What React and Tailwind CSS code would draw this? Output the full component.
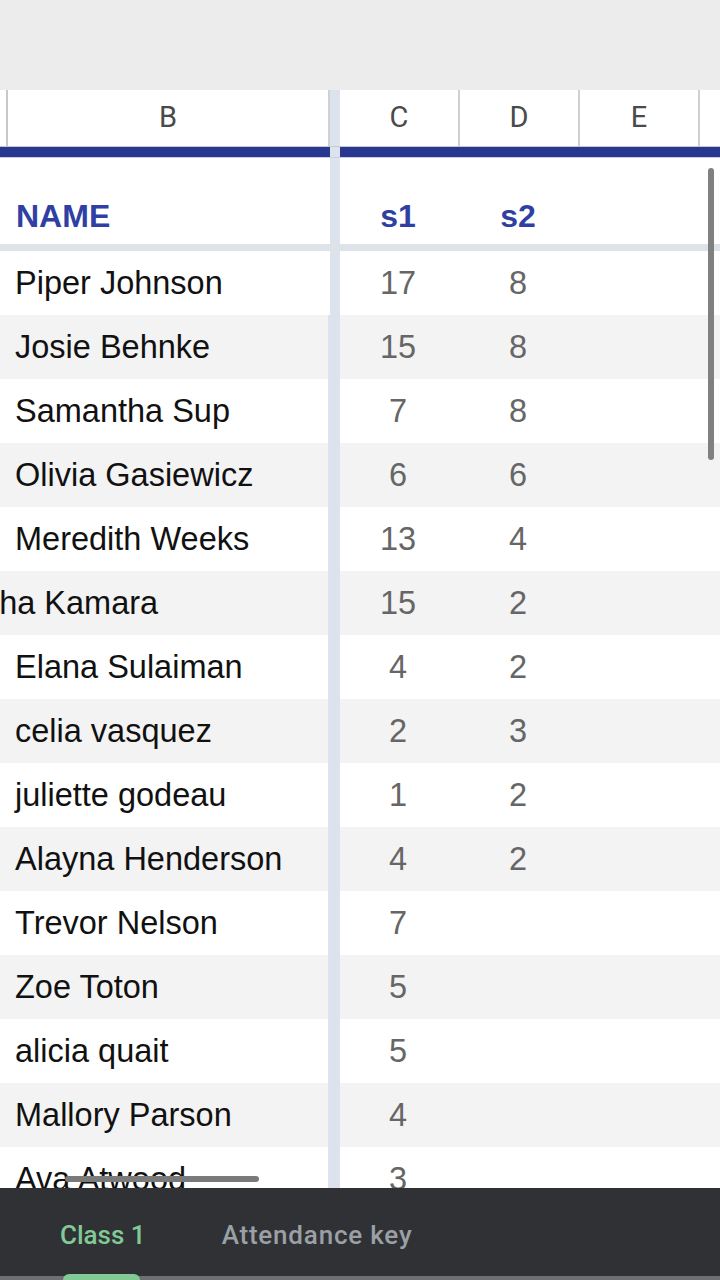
const rows = [
  { name: 'Piper Johnson', s1: '17', s2: '8' },
  { name: 'Josie Behnke', s1: '15', s2: '8' },
  { name: 'Samantha Sup', s1: '7', s2: '8' },
  { name: 'Olivia Gasiewicz', s1: '6', s2: '6' },
  { name: 'Meredith Weeks', s1: '13', s2: '4' },
  { name: 'Aisha Kamara', s1: '15', s2: '2', cut: true },
  { name: 'Elana Sulaiman', s1: '4', s2: '2' },
  { name: 'celia vasquez', s1: '2', s2: '3' },
  { name: 'juliette godeau', s1: '1', s2: '2' },
  { name: 'Alayna Henderson', s1: '4', s2: '2' },
  { name: 'Trevor Nelson', s1: '7', s2: '' },
  { name: 'Zoe Toton', s1: '5', s2: '' },
  { name: 'alicia quait', s1: '5', s2: '' },
  { name: 'Mallory Parson', s1: '4', s2: '' },
  { name: 'Ava Atwood', s1: '3', s2: '' },
]

function ColLetter({ children, className = '' }) {
  return (
    <div className={`h-full flex items-center justify-center border-r-2 border-[#d0d0d0] font-['Roboto',sans-serif] text-[29px] text-[#4a4a4a] ${className}`}>
      {children}
    </div>
  )
}

export default function App() {
  return (
    <div className="relative w-[720px] h-[1280px] overflow-hidden bg-white flex flex-col font-['Liberation_Sans',Arial,sans-serif]">
      {/* status area */}
      <div className="h-[90px] shrink-0 bg-[#ececec]" />

      {/* column letters */}
      <div className="h-[57px] shrink-0 flex border-b border-[#c8c8c8]">
        <div className="w-[330px] flex">
          <div className="w-[8px] h-full border-r-2 border-[#c8c8c8]" />
          <ColLetter className="flex-1 border-[#c8c8c8]">B</ColLetter>
        </div>
        <div className="w-[10px] bg-[#dce3ec]" />
        <div className="flex-1 flex">
          <ColLetter className="w-[120px]">C</ColLetter>
          <ColLetter className="w-[120px]">D</ColLetter>
          <ColLetter className="w-[120px]">E</ColLetter>
          <div className="flex-1" />
        </div>
      </div>

      {/* blue band */}
      <div className="h-[11px] shrink-0 flex border-b border-[#c9cfe6]">
        <div className="w-[330px] bg-[#283891]" />
        <div className="w-[10px] bg-[#dce3ec]" />
        <div className="flex-1 bg-[#283891]" />
      </div>

      {/* header row */}
      <div className="h-[86px] shrink-0 flex">
        <div className="w-[330px] flex items-center pl-4 pt-[30px] text-[32px] font-bold text-[#2f3fa3]">NAME</div>
        <div className="w-[10px] bg-[#dce3ec]" />
        <div className="flex-1 flex items-center pt-[30px] text-[32px] font-bold text-[#2f3fa3]">
          <div className="w-[120px] pr-1 text-center">s1</div>
          <div className="w-[120px] pr-1 text-center">s2</div>
        </div>
      </div>
      <div className="h-[7px] shrink-0 bg-[#dee3ea]" />

      {/* data rows */}
      <div className="flex-1 overflow-hidden">
        {rows.map((r, i) => (
          <div key={r.name} className={`h-[64px] flex ${i % 2 === 1 ? 'bg-[#f3f3f3]' : 'bg-white'}`}>
            <div className={`w-[330px] flex items-center overflow-hidden whitespace-nowrap text-[32.5px] text-[#111] ${i > 0 ? 'border-r-2 border-[#dfe2f3]' : ''}`}>
              <span className={r.cut ? '-ml-[46px]' : 'ml-[15px]'}>{r.name}</span>
            </div>
            <div className="w-[10px] bg-[#dce3ec]" />
            <div className="flex-1 flex items-center text-[32.5px] text-[#666]">
              <div className="w-[120px] pr-1 text-center">{r.s1}</div>
              <div className="w-[120px] pr-1 text-center">{r.s2}</div>
            </div>
          </div>
        ))}
      </div>

      {/* sheet tabs */}
      <div className="relative h-[92px] shrink-0 bg-[#303134] flex items-start pt-[28px] pl-[60px] gap-[76px] font-['Roboto',sans-serif] text-[26px] font-medium">
        <div className="text-[#81c995]">Class 1</div>
        <div className="text-[#9aa0a6] tracking-[0.8px]">Attendance key</div>
        <div className="absolute left-0 right-0 bottom-0 h-[4px] bg-[#6f6f72]" />
        <div className="absolute left-[63px] w-[77px] bottom-0 h-[6px] rounded-t-[6px] bg-[#81c995]" />
      </div>

      {/* scrollbar */}
      <div className="absolute left-[708px] top-[168px] w-[6px] h-[292px] rounded-full bg-[#808080]" />
      {/* home indicator */}
      <div className="absolute left-[65px] top-[1176px] w-[194px] h-[6px] rounded-full bg-[#7a7a7a]" />
    </div>
  )
}
